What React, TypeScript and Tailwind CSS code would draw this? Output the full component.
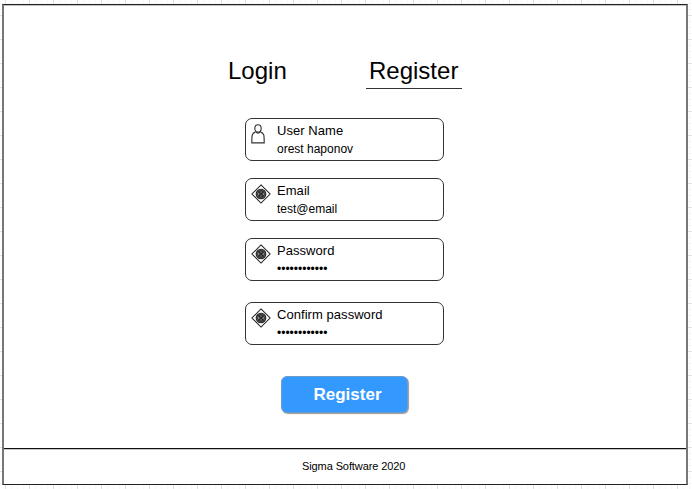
import type { ReactNode } from "react";

function UserIcon() {
  return (
    <svg width="14" height="20" viewBox="0 0 14 20" fill="none" stroke="#333" strokeWidth="1.15" className="block">
      <path d="M4.3 8.1C0.9 9.4 0.8 10.6 0.8 18.8H13.2C13.2 10.6 13.1 9.4 9.7 8.1" />
      <ellipse cx="7" cy="4.4" rx="3.2" ry="3.7" />
      <path d="M4.5 7.4C5.2 9.7 8.8 9.7 9.5 7.4" />
    </svg>
  );
}

function GatewayIcon() {
  return (
    <svg width="20" height="20" viewBox="0 0 20 20" fill="none" stroke="#222" className="block">
      <path d="M10 .9L19.1 10L10 19.1L.9 10Z" strokeWidth="1.05" />
      <circle cx="10" cy="10" r="4.8" fill="#888" strokeWidth="1.1" />
      <circle cx="10" cy="10" r="3.6" strokeWidth=".7" />
      <path d="M7.4 7.6L12.6 12.4M12.6 7.6L7.4 12.4" strokeWidth="1.4" />
      <path d="M8 7.2H12M8 12.8H12" strokeWidth=".8" />
    </svg>
  );
}

function Field({ label, value, icon }: { label: string; value: string; icon: ReactNode }) {
  return (
    <div className="flex h-[43px] w-[199px] rounded-[7px] border border-[#333] bg-white pt-[4px] pl-[5px]">
      <div className="w-[26px] shrink-0 pt-px">{icon}</div>
      <div className="whitespace-nowrap">
        <div className="text-[13px] leading-[15px] tracking-[0.05px]">{label}</div>
        <div className="mt-[4px] text-[12px] leading-[15px]">{value}</div>
      </div>
    </div>
  );
}

const canvasGrid =
  "bg-[linear-gradient(to_right,#e2e2e2_1px,transparent_1px),linear-gradient(to_bottom,#e2e2e2_1px,transparent_1px),linear-gradient(to_right,#f7f7f7_1px,transparent_1px),linear-gradient(to_bottom,#f7f7f7_1px,transparent_1px)] bg-[size:24px_24px,24px_24px,6px_6px,6px_6px] bg-[position:5px_15px,5px_15px,5px_3px,5px_3px]";

export default function App() {
  return (
    <div className={`h-[489px] w-[692px] overflow-hidden bg-white pt-1 pl-[2px] font-['Liberation_Sans',Arial,sans-serif] text-black ${canvasGrid}`}>
      <div className="flex h-[481px] w-[686px] flex-col border-x-2 border-t border-b border-x-[#777] border-y-[#222] bg-white">
        <main className="flex h-[443px] flex-col items-start border-t border-t-[#c0c0c0]">
          <nav className="flex pt-[51px] pl-[224px] text-[24px] leading-[28px]">
            <div className="w-[138px]">Login</div>
            <div className="h-[32px] w-[96px] border-b border-[#333] pl-[3px]">Register</div>
          </nav>
          <form className="flex flex-col pt-[29px] pl-[241px]">
            <Field label="User Name" value="orest haponov" icon={<UserIcon />} />
            <div className="mt-[17px]">
              <Field label="Email" value="test@email" icon={<GatewayIcon />} />
            </div>
            <div className="mt-[17px]">
              <Field label="Password" value="••••••••••••" icon={<GatewayIcon />} />
            </div>
            <div className="mt-[21px]">
              <Field label="Confirm password" value="••••••••••••" icon={<GatewayIcon />} />
            </div>
            <button type="button" className="mt-[31px] ml-[36px] h-[37px] w-[127px] rounded-[6px] border border-[#6c9bcc] bg-[#3399ff] pl-[6px] text-[17px] leading-[20px] font-bold text-white shadow-[1px_1px_1px_#999]">
              Register
            </button>
          </form>
        </main>
        <footer className="flex flex-1 border-t border-[#111] pt-[10px] pl-[298px] text-[11px] leading-[14px] tracking-[-0.1px] shadow-[inset_0_1px_0_#c8c8c8]">
          Sigma Software 2020
        </footer>
      </div>
    </div>
  );
}
